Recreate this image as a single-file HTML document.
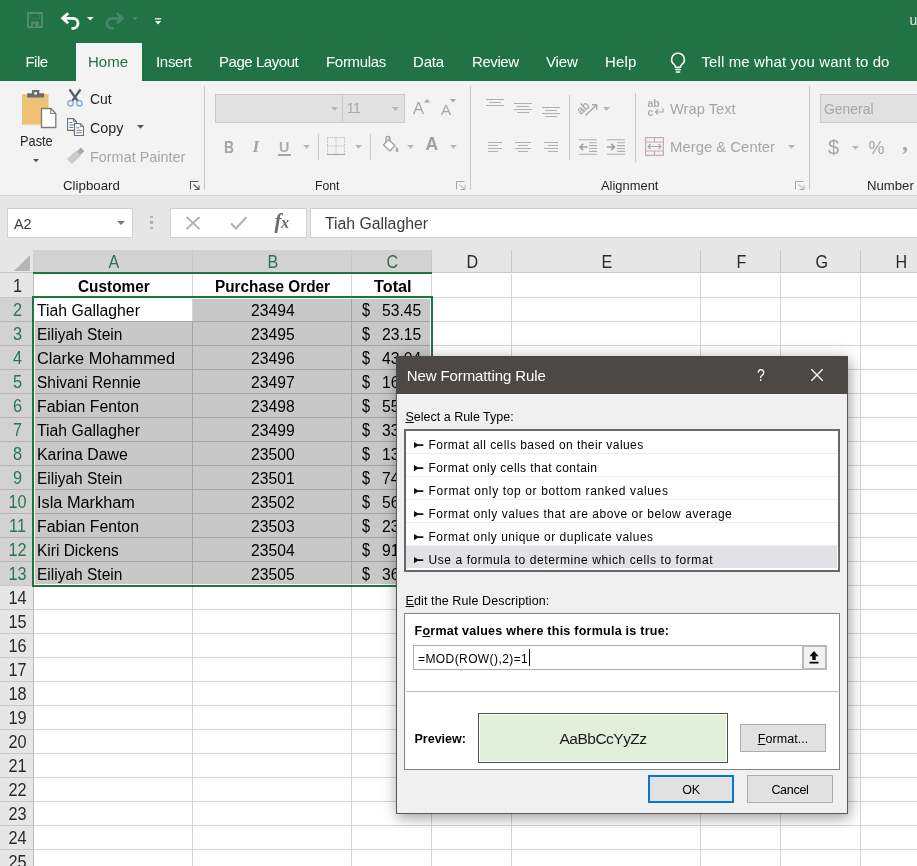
<!DOCTYPE html>
<html>
<head>
<meta charset="utf-8">
<title>Excel</title>
<style>
html,body{margin:0;padding:0;}
body{-webkit-font-smoothing:antialiased;will-change:transform;width:917px;height:866px;overflow:hidden;position:relative;background:#fff;font-family:"Liberation Sans",sans-serif;font-size:15px;color:#262626;}
.a{position:absolute;}
.t{position:absolute;white-space:nowrap;line-height:1;}
svg{position:absolute;overflow:visible;}
#titlebar{position:absolute;left:0;top:0;width:917px;height:80.6px;background:#217346;}
#hometab{position:absolute;left:76px;top:43px;width:66px;height:38px;background:#f3f3f3;}
.tab{position:absolute;top:53.7px;color:#fff;font-size:15px;white-space:nowrap;line-height:1;}
#ribbon{position:absolute;left:0;top:80.6px;width:917px;height:114.4px;background:#f3f3f3;}
#ribbonline{position:absolute;left:0;top:195px;width:917px;height:1px;background:#d6d6d6;}
#fbar{position:absolute;left:0;top:196px;width:917px;height:54px;background:#e6e6e6;}
.vsep{position:absolute;width:1px;background:#c9c9c9;}
.gl{position:absolute;top:179px;font-size:13.5px;color:#262626;white-space:nowrap;line-height:1;display:inline-block;transform-origin:0 50%;}
.rt{position:absolute;white-space:nowrap;line-height:1;font-size:15px;color:#262626;display:inline-block;transform-origin:0 50%;}
.dis{color:#a6a6a6;}
.box{position:absolute;background:#fff;border:1px solid #d0d0d0;box-sizing:border-box;}
.dbox{position:absolute;background:#e1e1e1;border:1px solid #c8c8c8;box-sizing:border-box;}
/* grid */
#grid{position:absolute;left:0;top:250px;width:917px;height:616px;background:#fff;overflow:hidden;}
.ch{position:absolute;top:0;height:22px;background:#e6e6e6;border-right:1px solid #c8c8c8;box-sizing:border-box;text-align:center;padding-left:2px;font-size:17.5px;line-height:25px;color:#2b2b2b;}
.ch.sel{background:#d2d2d2;color:#2a7550;}
.rh{position:absolute;left:0.5px;width:33px;height:24px;text-align:center;font-size:17.5px;line-height:25px;color:#2b2b2b;transform:scaleX(0.93);}
.rh.sel{color:#2a7550;}
.vl{position:absolute;top:24px;width:1px;height:600px;background:#d4d4d4;}
.hl{position:absolute;left:33px;height:1px;width:884px;background:#d4d4d4;}
.c{position:absolute;height:24px;line-height:25px;font-size:16px;color:#000;white-space:nowrap;display:inline-block;transform-origin:0 50%;}
.b{font-weight:bold;color:#000;}
/* dialog */
#dlg{position:absolute;left:396px;top:356px;width:452px;height:458px;background:#f0f0f0;box-shadow:0 0 16px rgba(0,0,0,0.16),2px 5px 12px rgba(0,0,0,0.26);border:1px solid #5a5856;box-sizing:border-box;}
#dtitle{position:absolute;left:-1px;top:-1px;width:452px;height:38px;background:#4b4846;}
.dt{position:absolute;white-space:nowrap;line-height:1;font-size:12px;color:#000;}
.li{position:absolute;left:0;width:432px;height:23px;box-sizing:border-box;border-bottom:1px solid #ececec;}
.btn{position:absolute;box-sizing:border-box;background:#e1e1e1;border:1px solid #adadad;text-align:center;font-size:12.5px;color:#000;}
u{text-decoration:underline;}
</style>
</head>
<body>
<div id="titlebar"></div>
<div id="hometab"></div>
<!-- QAT icons -->
<svg style="left:27px;top:12px" width="16" height="16" viewBox="0 0 16 16"><path d="M1 1h14v14h-14z" fill="none" stroke="#4e8d6b" stroke-width="2"/><path d="M4 9.500h8v5.500h-8z" fill="#4e8d6b"/><path d="M6.200 11.500h2v3.500h-2z" fill="#217346"/><path d="M3.500 2v4.500h9v-4.500" fill="none" stroke="#3b8059" stroke-width="1"/></svg>
<svg style="left:60px;top:12px" width="21" height="17" viewBox="0 0 21 17"><path d="M8.200 1.200 L2.600 6.300 L8.200 11.200 M3 6.300 H13 a5 5 0 0 1 0 10 H11.500" fill="none" stroke="#fff" stroke-width="2.800" stroke-linejoin="miter"/></svg>
<svg style="left:87px;top:17px" width="7" height="4" viewBox="0 0 7 4"><path d="M0 0h6.600l-3.300 3.400z" fill="#fff"/></svg>
<svg style="left:104px;top:12px" width="21" height="17" viewBox="0 0 21 17"><path d="M12.800 1.200 L18.400 6.300 L12.800 11.200 M18 6.300 H8 a5 5 0 0 0 0 10 H9.500" fill="none" stroke="#43896a" stroke-width="2.800"/></svg>
<svg style="left:131.500px;top:17px" width="7" height="4" viewBox="0 0 7 4"><path d="M0 0h6l-3 3.200z" fill="#43896a"/></svg>
<svg style="left:154.500px;top:18px" width="7" height="7" viewBox="0 0 7 7"><path d="M0 0.200h6.200v1.300h-6.200z M0 3h6.200l-3.100 3.500z" fill="#fff"/></svg>
<!-- tabs -->
<span class="tab" id="t_file" style="letter-spacing:-0.54px;left:25.5px">File</span>
<span class="tab" id="t_home" style="left:88px;color:#217346">Home</span>
<span class="tab" id="t_insert" style="letter-spacing:-0.3px;left:156px">Insert</span>
<span class="tab" id="t_pl" style="letter-spacing:-0.45px;left:219px">Page Layout</span>
<span class="tab" id="t_form" style="letter-spacing:-0.31px;left:326px">Formulas</span>
<span class="tab" id="t_data" style="letter-spacing:-0.17px;left:413px">Data</span>
<span class="tab" id="t_rev" style="letter-spacing:-0.41px;left:472px">Review</span>
<span class="tab" id="t_view" style="letter-spacing:-0.14px;left:546px">View</span>
<span class="tab" id="t_help" style="letter-spacing:0.14px;left:605px">Help</span>
<svg style="left:668.500px;top:51.700px" width="18" height="22" viewBox="0 0 18 22"><path d="M9 1.2a6.3 6.3 0 0 0-3.6 11.5c.8.7 1.1 1.500 1.100 2.600h5c0-1.100.3-1.900 1.100-2.600A6.300 6.300 0 0 0 9 1.200z M6.200 17.600h5.600 M6.800 20h4.400" fill="none" stroke="#fff" stroke-width="1.500"/></svg>
<span class="tab" id="t_tell" style="letter-spacing:0.11px;left:701.5px">Tell me what you want to do</span>
<span class="tab" id="t_u" style="left:909.500px;top:13.300px;font-size:14px;color:#dfeee6">u</span>
<div id="ribbon"></div>
<div id="ribbonline"></div>
<!-- ===== Clipboard group ===== -->
<!-- paste icon -->
<svg style="left:21px;top:89px" width="36" height="40" viewBox="0 0 36 40">
<rect x="1" y="5.200" width="26.500" height="30.500" fill="#eec273"/>
<path d="M6.200 4.200h4.800v-3.200h7.300v3.200h4.800v4.400h-16.900z" fill="#6b6b6b"/>
<rect x="13.300" y="3" width="2.600" height="2.600" fill="#f3f3f3"/>
<path d="M20.500 19.500h9.300l5 5v14h-14.300z" fill="#fff" stroke="#7a7a7a" stroke-width="1.300"/>
<path d="M29.800 19.500v5h5" fill="none" stroke="#7a7a7a" stroke-width="1.100"/>
</svg>
<span class="rt" id="r_paste" style="transform:scaleX(0.852);left:19.500px;top:133px">Paste</span>
<svg style="left:33.200px;top:159px" width="6" height="4" viewBox="0 0 6 4"><path d="M0 0h6l-3 3.300z" fill="#555"/></svg>
<!-- scissors -->
<svg style="left:66px;top:89px" width="18" height="18" viewBox="0 0 18 18">
<path d="M3.500 0.500 L11.800 12 M14.500 0.500 L6.200 12" fill="none" stroke="#5c5c64" stroke-width="2.200"/>
<circle cx="4.500" cy="14.300" r="2.700" fill="#eaf3fb" stroke="#7fa9d9" stroke-width="1.300"/>
<circle cx="13.400" cy="14.300" r="2.700" fill="#eaf3fb" stroke="#7fa9d9" stroke-width="1.300"/>
</svg>
<span class="rt" id="r_cut" style="transform:scaleX(0.930);left:90px;top:90.500px">Cut</span>
<!-- copy icon -->
<svg style="left:67px;top:118px" width="18" height="19" viewBox="0 0 18 19">
<path d="M0.600 0.600h5.800l3 3v8.800h-8.800z" fill="#fff" stroke="#6e6e6e" stroke-width="1.100"/>
<path d="M6.400 0.600v3h3" fill="none" stroke="#6e6e6e" stroke-width="0.900"/>
<path d="M2.300 4.500h3 M2.300 7h5 M2.300 9.500h4" stroke="#5f7f9f" stroke-width="1"/>
<path d="M7.500 5.500h5.800l3.200 3.200v8.800h-9z" fill="#fff" stroke="#6e6e6e" stroke-width="1.100"/>
<path d="M13.300 5.500v3.200h3.200" fill="none" stroke="#6e6e6e" stroke-width="0.900"/>
<path d="M9.300 9.800h3 M9.300 12.300h5.500 M9.300 14.800h5.500" stroke="#5f7f9f" stroke-width="1"/>
</svg>
<span class="rt" id="r_copy" style="transform:scaleX(0.956);left:90px;top:120px">Copy</span>
<svg style="left:136.500px;top:125px" width="7" height="4" viewBox="0 0 7 4"><path d="M0 0h7l-3.500 3.800z" fill="#555"/></svg>
<!-- format painter icon (disabled) -->
<svg style="left:67px;top:148px" width="18" height="15" viewBox="0 0 18 15">
<g transform="rotate(-42 9 7.500)">
<rect x="12.500" y="5" width="5.500" height="5" fill="#a9a9a9"/>
<rect x="10.200" y="4.300" width="2.300" height="6.400" fill="#c2c2c2"/>
<rect x="0" y="3.800" width="10.200" height="7.400" fill="#d2d2d2"/>
<path d="M0 5.600h10 M0 7.500h10 M0 9.400h10" stroke="#c0c0c0" stroke-width="0.800"/>
</g>
</svg>
<span class="rt dis" id="r_fp" style="transform:scaleX(0.961);left:90px;top:148.500px">Format Painter</span>
<span class="gl" id="g_clip" style="transform:scaleX(0.984);left:62.500px">Clipboard</span>
<svg class="lnch" style="left:190px;top:181px" width="10" height="9" viewBox="0 0 10 9"><path d="M0.500 8.500v-8h8 M3.500 3.500l5 4.500 M9 4.500v4h-4.500" fill="none" stroke="#5a5a5a" stroke-width="1.1"/></svg>
<div class="vsep" style="left:204px;top:86px;height:104px"></div>
<!-- ===== Font group ===== -->
<div class="dbox" style="left:215px;top:94px;width:128px;height:29px"></div>
<div class="dbox" style="left:342px;top:94px;width:63px;height:29px"></div>
<svg style="left:330.500px;top:107px" width="7" height="4" viewBox="0 0 7 4"><path d="M0 0h7l-3.500 3.800z" fill="#b5b5b5"/></svg>
<span class="rt dis" id="r_11" style="transform:scaleX(0.851);left:347px;top:100px;font-size:15.500px">11</span>
<svg style="left:392px;top:107px" width="7" height="4" viewBox="0 0 7 4"><path d="M0 0h7l-3.500 3.800z" fill="#b5b5b5"/></svg>
<span class="rt dis" id="r_Aup" style="left:413px;top:100px;font-size:16.500px">A</span>
<svg style="left:423.500px;top:98.500px" width="6" height="4" viewBox="0 0 6 4"><path d="M0 3.500h6l-3-3.500z" fill="#a6a6a6"/></svg>
<span class="rt dis" id="r_Adn" style="left:441px;top:101.500px;font-size:15px">A</span>
<svg style="left:450px;top:98.500px" width="6" height="4" viewBox="0 0 6 4"><path d="M0 0h6l-3 3.500z" fill="#a6a6a6"/></svg>
<span class="rt dis" id="r_B" style="transform:scaleX(0.84);left:223.500px;top:138.500px;font-size:16.500px;font-weight:bold">B</span>
<span class="rt dis" id="r_I" style="left:252.500px;top:138px;font-size:17.500px;font-style:italic;font-weight:bold;font-family:'Liberation Serif',serif">I</span>
<span class="rt dis" id="r_U" style="transform:scaleX(0.92);left:278.500px;top:138.500px;font-size:15.500px;font-weight:bold;color:#ababab">U</span>
<div class="a" style="left:278px;top:154px;width:13px;height:1.500px;background:#a6a6a6"></div>
<svg style="left:302.500px;top:145px" width="7" height="4" viewBox="0 0 7 4"><path d="M0 0h7l-3.500 3.800z" fill="#b5b5b5"/></svg>
<div class="vsep" style="left:318px;top:134px;height:26px"></div>
<!-- borders icon -->
<svg style="left:327px;top:137px" width="18" height="18" viewBox="0 0 18 18">
<path d="M0.500 0.500h17 M0.500 0.500v17 M17.500 0.500v17 M9 0.500v17 M0.500 9h17" fill="none" stroke="#c59fcf" stroke-width="1" stroke-dasharray="1 1.200"/>
<path d="M0 17.500h18" stroke="#adadad" stroke-width="1.300"/>
</svg>
<svg style="left:354.500px;top:145px" width="7" height="4" viewBox="0 0 7 4"><path d="M0 0h7l-3.500 3.800z" fill="#b5b5b5"/></svg>
<div class="vsep" style="left:370px;top:134px;height:26px"></div>
<!-- fill bucket -->
<svg style="left:382px;top:136px" width="17" height="17" viewBox="0 0 17 17">
<path d="M6.500 3.500l6.500 6-5 5.500-6.500-6z" fill="#fff" stroke="#a0a0a0" stroke-width="1.300" stroke-linejoin="round"/>
<path d="M4 6.500v-4a2 2 0 0 1 4 0v3" fill="none" stroke="#a0a0a0" stroke-width="1.300"/>
<path d="M14.500 10.500c1.500 2 2 3 2 4a1.500 1.500 0 0 1-3 0c0-1 .3-2 1-4z" fill="#a9a9a9"/>
</svg>
<svg style="left:406.500px;top:145px" width="7" height="4" viewBox="0 0 7 4"><path d="M0 0h7l-3.500 3.800z" fill="#b5b5b5"/></svg>
<span class="rt dis" id="r_Afc" style="left:425.500px;top:136px;font-size:17.500px;font-weight:bold;color:#a0a0a0">A</span>
<svg style="left:449.500px;top:145px" width="7" height="4" viewBox="0 0 7 4"><path d="M0 0h7l-3.500 3.800z" fill="#b5b5b5"/></svg>
<span class="gl" id="g_font" style="transform:scaleX(0.907);left:314.500px">Font</span>
<svg class="lnch" style="left:456px;top:181px" width="10" height="9" viewBox="0 0 10 9"><path d="M0.500 8.500v-8h8 M3.500 3.500l5 4.500 M9 4.500v4h-4.500" fill="none" stroke="#a8a8a8" stroke-width="1"/></svg>
<div class="vsep" style="left:470px;top:86px;height:104px"></div>
<!-- ===== Alignment group ===== -->
<!-- top row vertical align icons -->
<svg style="left:486px;top:98px" width="18" height="10" viewBox="0 0 18 10"><path d="M0 1.500h18 M3 4.500h12 M0 7.500h18" stroke="#b0b0b0" stroke-width="1.200"/></svg>
<svg style="left:514px;top:102px" width="18" height="12" viewBox="0 0 18 12"><path d="M0 1.500h18 M3 4.500h12 M0 7.500h18 M3 10.500h12" stroke="#b0b0b0" stroke-width="1.200"/></svg>
<svg style="left:542px;top:106px" width="18" height="12" viewBox="0 0 18 12"><path d="M0 1.500h18 M3 4.500h12 M0 7.500h18 M3 10.500h12" stroke="#b0b0b0" stroke-width="1.200"/></svg>
<div class="vsep" style="left:569px;top:95px;height:65px"></div>
<!-- orientation -->
<svg style="left:578px;top:99px" width="21" height="17" viewBox="0 0 21 17">
<text x="-1" y="12" font-family="Liberation Sans" font-size="11.500" fill="#a6a6a6" stroke="#a6a6a6" stroke-width="0.300" transform="rotate(-42 6 9)">ab</text>
<path d="M7.500 16.500 L18 6.500 M14 5.800h4.700v4.700" fill="none" stroke="#a8a8a8" stroke-width="1.400"/>
</svg>
<svg style="left:602.500px;top:106.500px" width="7" height="4" viewBox="0 0 7 4"><path d="M0 0h7l-3.500 3.800z" fill="#b5b5b5"/></svg>
<div class="vsep" style="left:635px;top:93px;height:69px"></div>
<!-- wrap text icon -->
<svg style="left:647px;top:99px" width="18" height="18" viewBox="0 0 18 18">
<text x="0.500" y="7.500" font-family="Liberation Sans" font-size="10.500" font-weight="bold" fill="#ababab">ab</text>
<text x="0.500" y="16.500" font-family="Liberation Sans" font-size="10.500" font-weight="bold" fill="#ababab">c</text>
<path d="M16 9.500v3.500h-7.500 M11 10.500l-2.500 2.500 2.500 2.500" fill="none" stroke="#a8a8a8" stroke-width="1.200"/>
</svg>
<span class="rt dis" id="r_wrap" style="transform:scaleX(0.979);left:670px;top:100.500px">Wrap Text</span>
<!-- row 2 horizontal align icons -->
<svg style="left:488px;top:141px" width="14" height="12" viewBox="0 0 14 12"><path d="M0 1.500h14 M0 4.500h10 M0 7.500h14 M0 10.500h10" stroke="#b0b0b0" stroke-width="1.200"/></svg>
<svg style="left:515px;top:141px" width="16" height="12" viewBox="0 0 16 12"><path d="M0 1.500h16 M3 4.500h10 M0 7.500h16 M3 10.500h10" stroke="#b0b0b0" stroke-width="1.200"/></svg>
<svg style="left:544px;top:141px" width="14" height="12" viewBox="0 0 14 12"><path d="M0 1.500h14 M4 4.500h10 M0 7.500h14 M4 10.500h10" stroke="#b0b0b0" stroke-width="1.200"/></svg>
<!-- indent icons -->
<svg style="left:579px;top:139px" width="18" height="16" viewBox="0 0 18 16"><path d="M0 0.800h18 M10 3.700h8 M10 6.600h8 M10 9.500h8 M10 12.400h8 M0 15.300h18" stroke="#b0b0b0" stroke-width="1.100"/><path d="M8.500 8h-7.500 M4.200 4.800l-3.200 3.200 3.200 3.200" fill="none" stroke="#a0a0a0" stroke-width="1.700"/></svg>
<svg style="left:607px;top:139px" width="18" height="16" viewBox="0 0 18 16"><path d="M0 0.800h18 M10 3.700h8 M10 6.600h8 M10 9.500h8 M10 12.400h8 M0 15.300h18" stroke="#b0b0b0" stroke-width="1.100"/><path d="M0 8h7.500 M4.300 4.800l3.200 3.200-3.200 3.200" fill="none" stroke="#a0a0a0" stroke-width="1.700"/></svg>
<!-- merge icon -->
<svg style="left:645px;top:137px" width="19" height="19" viewBox="0 0 19 19">
<path d="M0.600 0.600h17.800v17.800h-17.800z M0.500 5h18 M0.500 14h18 M9.500 0.500v4.500 M9.500 14v4.500" fill="none" stroke="#c4acb6" stroke-width="1.200"/>
<path d="M3 9.500h13 M5.500 7l-2.500 2.500 2.500 2.500 M13.500 7l2.500 2.500-2.500 2.500" fill="none" stroke="#a8a8a8" stroke-width="1.100"/>
</svg>
<span class="rt dis" id="r_merge" style="transform:scaleX(0.992);left:670px;top:139px">Merge &amp; Center</span>
<svg style="left:787.500px;top:145px" width="7" height="4" viewBox="0 0 7 4"><path d="M0 0h7l-3.500 3.800z" fill="#b5b5b5"/></svg>
<span class="gl" id="g_align" style="transform:scaleX(0.956);left:600.500px">Alignment</span>
<svg class="lnch" style="left:795px;top:181px" width="10" height="9" viewBox="0 0 10 9"><path d="M0.500 8.500v-8h8 M3.500 3.500l5 4.500 M9 4.500v4h-4.500" fill="none" stroke="#a8a8a8" stroke-width="1"/></svg>
<div class="vsep" style="left:809px;top:86px;height:104px"></div>
<!-- ===== Number group ===== -->
<div class="dbox" style="left:820px;top:94px;width:110px;height:29px"></div>
<span class="rt dis" id="r_gen" style="transform:scaleX(0.927);left:823.500px;top:100.500px">General</span>
<span class="rt dis" id="r_dollar" style="left:828px;top:136.500px;font-size:20px">$</span>
<svg style="left:851.500px;top:146px" width="7" height="4" viewBox="0 0 7 4"><path d="M0 0h7l-3.500 3.800z" fill="#b5b5b5"/></svg>
<span class="rt dis" id="r_pct" style="left:868.500px;top:138.500px;font-size:18px">%</span>
<span class="rt dis" id="r_comma" style="left:902px;top:130px;font-size:24px;font-weight:bold;font-family:'Liberation Serif',serif">,</span>
<span class="gl" id="g_num" style="transform:scaleX(0.975);left:867px">Number</span>
<div id="fbar"></div>
<div class="box" style="left:7px;top:208px;width:126px;height:30px"></div>
<span class="rt" id="f_a2" style="transform:scaleX(0.959);left:13.500px;top:215.500px;color:#3b3b3b">A2</span>
<svg style="left:116.500px;top:221px" width="8" height="4" viewBox="0 0 8 4"><path d="M0 0h8l-4 4z" fill="#7a7a7a"/></svg>
<div class="a" style="left:150px;top:215.500px;width:2.500px;height:2.500px;background:#b0b0b0"></div>
<div class="a" style="left:150px;top:221px;width:2.500px;height:2.500px;background:#b0b0b0"></div>
<div class="a" style="left:150px;top:226.500px;width:2.500px;height:2.500px;background:#b0b0b0"></div>
<div class="box" style="left:170px;top:208px;width:137px;height:30px"></div>
<svg style="left:186px;top:216px" width="14" height="14" viewBox="0 0 14 14"><path d="M0.500 1l13 12 M13.500 1l-13 12" stroke="#b4b4b4" stroke-width="2"/></svg>
<svg style="left:229.500px;top:216px" width="18" height="14" viewBox="0 0 18 14"><path d="M1 7.500l5 5 10.500-11.500" fill="none" stroke="#b4b4b4" stroke-width="2.200"/></svg>
<span class="t" id="f_fx" style="left:274.500px;top:210.500px;font-family:'Liberation Serif',serif;font-style:italic;font-weight:bold;font-size:21px;color:#6a6a6a;letter-spacing:-0.5px">f<span style="font-size:16px">x</span></span>
<div class="box" style="left:310px;top:208px;width:620px;height:30px"></div>
<span class="rt" id="f_txt" style="transform:scaleX(0.987);left:324.500px;top:216px;color:#3b3b3b;font-size:16px">Tiah Gallagher</span>
<div id="grid">
<div class="a" style="left:0;top:0;width:33px;height:24px;background:#e6e6e6"></div>
<svg style="left:14px;top:5px" width="16" height="16" viewBox="0 0 16 16"><path d="M16 0v16h-16z" fill="#b5b5b5"/></svg>
<div class="ch sel" style="left:33px;width:160px"><span style="display:inline-block;transform:scaleX(0.92)">A</span></div>
<div class="ch sel" style="left:193px;width:159px"><span style="display:inline-block;transform:scaleX(0.92)">B</span></div>
<div class="ch sel" style="left:352px;width:80px"><span style="display:inline-block;transform:scaleX(0.92)">C</span></div>
<div class="ch" style="left:432px;width:80px"><span style="display:inline-block;transform:scaleX(0.92)">D</span></div>
<div class="ch" style="left:512px;width:189px"><span style="display:inline-block;transform:scaleX(0.92)">E</span></div>
<div class="ch" style="left:701px;width:80px"><span style="display:inline-block;transform:scaleX(0.92)">F</span></div>
<div class="ch" style="left:781px;width:80px"><span style="display:inline-block;transform:scaleX(0.92)">G</span></div>
<div class="ch" style="left:861px;width:80px"><span style="display:inline-block;transform:scaleX(0.92)">H</span></div>
<div class="a" style="left:0;top:22px;width:917px;height:1px;background:#c8c8c8"></div>
<div class="a" style="left:33px;top:22px;width:399px;height:2px;background:#217346"></div>
<div class="a" style="left:33px;top:48px;width:399px;height:288px;background:#c8c8c8"></div>
<div class="a" style="left:34px;top:48px;width:159px;height:24px;background:#fff"></div>
<div class="vl" style="left:192px"></div>
<div class="vl" style="left:351px"></div>
<div class="vl" style="left:431px"></div>
<div class="vl" style="left:511px"></div>
<div class="vl" style="left:700px"></div>
<div class="vl" style="left:780px"></div>
<div class="vl" style="left:860px"></div>
<div class="vl" style="left:940px"></div>
<div class="a" style="left:192px;top:72px;width:1px;height:264px;background:#a4a4a4"></div>
<div class="a" style="left:351px;top:72px;width:1px;height:264px;background:#a4a4a4"></div>
<div class="a" style="left:351px;top:48px;width:1px;height:24px;background:#a4a4a4"></div>
<div class="hl" style="top:47px"></div>
<div class="hl" style="top:71px"></div>
<div class="hl" style="top:95px"></div>
<div class="hl" style="top:119px"></div>
<div class="hl" style="top:143px"></div>
<div class="hl" style="top:167px"></div>
<div class="hl" style="top:191px"></div>
<div class="hl" style="top:215px"></div>
<div class="hl" style="top:239px"></div>
<div class="hl" style="top:263px"></div>
<div class="hl" style="top:287px"></div>
<div class="hl" style="top:311px"></div>
<div class="hl" style="top:335px"></div>
<div class="hl" style="top:359px"></div>
<div class="hl" style="top:383px"></div>
<div class="hl" style="top:407px"></div>
<div class="hl" style="top:431px"></div>
<div class="hl" style="top:455px"></div>
<div class="hl" style="top:479px"></div>
<div class="hl" style="top:503px"></div>
<div class="hl" style="top:527px"></div>
<div class="hl" style="top:551px"></div>
<div class="hl" style="top:575px"></div>
<div class="hl" style="top:599px"></div>
<div class="hl" style="top:623px"></div>
<div class="hl" style="top:647px"></div>
<div class="a" style="left:33px;top:71px;width:399px;height:1px;background:#a4a4a4"></div>
<div class="a" style="left:33px;top:95px;width:399px;height:1px;background:#a4a4a4"></div>
<div class="a" style="left:33px;top:119px;width:399px;height:1px;background:#a4a4a4"></div>
<div class="a" style="left:33px;top:143px;width:399px;height:1px;background:#a4a4a4"></div>
<div class="a" style="left:33px;top:167px;width:399px;height:1px;background:#a4a4a4"></div>
<div class="a" style="left:33px;top:191px;width:399px;height:1px;background:#a4a4a4"></div>
<div class="a" style="left:33px;top:215px;width:399px;height:1px;background:#a4a4a4"></div>
<div class="a" style="left:33px;top:239px;width:399px;height:1px;background:#a4a4a4"></div>
<div class="a" style="left:33px;top:263px;width:399px;height:1px;background:#a4a4a4"></div>
<div class="a" style="left:33px;top:287px;width:399px;height:1px;background:#a4a4a4"></div>
<div class="a" style="left:33px;top:311px;width:399px;height:1px;background:#a4a4a4"></div>
<div class="a" style="left:0;top:24px;width:33px;height:600px;background:#e6e6e6"></div>
<div class="a" style="left:0;top:48px;width:33px;height:288px;background:#d2d2d2"></div>
<div class="a" style="left:0;top:47px;width:33px;height:1px;background:#c8c8c8"></div>
<div class="rh" style="top:24px">1</div>
<div class="a" style="left:0;top:71px;width:33px;height:1px;background:#b4b4b4"></div>
<div class="rh sel" style="top:48px">2</div>
<div class="a" style="left:0;top:95px;width:33px;height:1px;background:#b4b4b4"></div>
<div class="rh sel" style="top:72px">3</div>
<div class="a" style="left:0;top:119px;width:33px;height:1px;background:#b4b4b4"></div>
<div class="rh sel" style="top:96px">4</div>
<div class="a" style="left:0;top:143px;width:33px;height:1px;background:#b4b4b4"></div>
<div class="rh sel" style="top:120px">5</div>
<div class="a" style="left:0;top:167px;width:33px;height:1px;background:#b4b4b4"></div>
<div class="rh sel" style="top:144px">6</div>
<div class="a" style="left:0;top:191px;width:33px;height:1px;background:#b4b4b4"></div>
<div class="rh sel" style="top:168px">7</div>
<div class="a" style="left:0;top:215px;width:33px;height:1px;background:#b4b4b4"></div>
<div class="rh sel" style="top:192px">8</div>
<div class="a" style="left:0;top:239px;width:33px;height:1px;background:#b4b4b4"></div>
<div class="rh sel" style="top:216px">9</div>
<div class="a" style="left:0;top:263px;width:33px;height:1px;background:#b4b4b4"></div>
<div class="rh sel" style="top:240px">10</div>
<div class="a" style="left:0;top:287px;width:33px;height:1px;background:#b4b4b4"></div>
<div class="rh sel" style="top:264px">11</div>
<div class="a" style="left:0;top:311px;width:33px;height:1px;background:#b4b4b4"></div>
<div class="rh sel" style="top:288px">12</div>
<div class="a" style="left:0;top:335px;width:33px;height:1px;background:#c8c8c8"></div>
<div class="rh sel" style="top:312px">13</div>
<div class="a" style="left:0;top:359px;width:33px;height:1px;background:#c8c8c8"></div>
<div class="rh" style="top:336px">14</div>
<div class="a" style="left:0;top:383px;width:33px;height:1px;background:#c8c8c8"></div>
<div class="rh" style="top:360px">15</div>
<div class="a" style="left:0;top:407px;width:33px;height:1px;background:#c8c8c8"></div>
<div class="rh" style="top:384px">16</div>
<div class="a" style="left:0;top:431px;width:33px;height:1px;background:#c8c8c8"></div>
<div class="rh" style="top:408px">17</div>
<div class="a" style="left:0;top:455px;width:33px;height:1px;background:#c8c8c8"></div>
<div class="rh" style="top:432px">18</div>
<div class="a" style="left:0;top:479px;width:33px;height:1px;background:#c8c8c8"></div>
<div class="rh" style="top:456px">19</div>
<div class="a" style="left:0;top:503px;width:33px;height:1px;background:#c8c8c8"></div>
<div class="rh" style="top:480px">20</div>
<div class="a" style="left:0;top:527px;width:33px;height:1px;background:#c8c8c8"></div>
<div class="rh" style="top:504px">21</div>
<div class="a" style="left:0;top:551px;width:33px;height:1px;background:#c8c8c8"></div>
<div class="rh" style="top:528px">22</div>
<div class="a" style="left:0;top:575px;width:33px;height:1px;background:#c8c8c8"></div>
<div class="rh" style="top:552px">23</div>
<div class="a" style="left:0;top:599px;width:33px;height:1px;background:#c8c8c8"></div>
<div class="rh" style="top:576px">24</div>
<div class="a" style="left:0;top:623px;width:33px;height:1px;background:#c8c8c8"></div>
<div class="rh" style="top:600px">25</div>
<div class="a" style="left:0;top:647px;width:33px;height:1px;background:#c8c8c8"></div>
<div class="rh" style="top:624px">26</div>
<div class="a" style="left:33px;top:24px;width:1px;height:600px;background:#bdbdbd"></div>
<div class="a" style="left:32px;top:48px;width:2px;height:288px;background:#217346"></div>
<span class="c b" id="h_cust" style="left:77.500px;top:24px;transform:scaleX(0.96)">Customer</span>
<span class="c b" id="h_po" style="left:214.500px;top:24px;transform:scaleX(0.958)">Purchase Order</span>
<span class="c b" id="h_tot" style="left:373.500px;top:24px;transform:scaleX(1.015)">Total</span>
<span class="c " id="n2" style="left:37px;top:48px;transform:scaleX(0.986);">Tiah Gallagher</span>
<span class="c " id="p2" style="left:250.5px;top:48px;transform:scaleX(0.98);">23494</span>
<span class="c " id="d2" style="left:362px;top:48px;transform:scaleX(0.8);font-size:18px;">$</span>
<span class="c " id="v2" style="left:382px;top:48px;transform:scaleX(0.98);">53.45</span>
<span class="c " id="n3" style="left:37px;top:72px;transform:scaleX(0.969);">Eiliyah Stein</span>
<span class="c " id="p3" style="left:250.5px;top:72px;transform:scaleX(0.98);">23495</span>
<span class="c " id="d3" style="left:362px;top:72px;transform:scaleX(0.8);font-size:18px;">$</span>
<span class="c " id="v3" style="left:382px;top:72px;transform:scaleX(0.98);">23.15</span>
<span class="c " id="n4" style="left:37px;top:96px;transform:scaleX(1.021);">Clarke Mohammed</span>
<span class="c " id="p4" style="left:250.5px;top:96px;transform:scaleX(0.98);">23496</span>
<span class="c " id="d4" style="left:362px;top:96px;transform:scaleX(0.8);font-size:18px;">$</span>
<span class="c " id="v4" style="left:382px;top:96px;transform:scaleX(0.98);">43.04</span>
<span class="c " id="n5" style="left:37px;top:120px;transform:scaleX(0.965);">Shivani Rennie</span>
<span class="c " id="p5" style="left:250.5px;top:120px;transform:scaleX(0.98);">23497</span>
<span class="c " id="d5" style="left:362px;top:120px;transform:scaleX(0.8);font-size:18px;">$</span>
<span class="c " id="v5" style="left:382px;top:120px;transform:scaleX(0.98);">16.32</span>
<span class="c " id="n6" style="left:37px;top:144px;transform:scaleX(0.988);">Fabian Fenton</span>
<span class="c " id="p6" style="left:250.5px;top:144px;transform:scaleX(0.98);">23498</span>
<span class="c " id="d6" style="left:362px;top:144px;transform:scaleX(0.8);font-size:18px;">$</span>
<span class="c " id="v6" style="left:382px;top:144px;transform:scaleX(0.98);">55.90</span>
<span class="c " id="n7" style="left:37px;top:168px;transform:scaleX(0.986);">Tiah Gallagher</span>
<span class="c " id="p7" style="left:250.5px;top:168px;transform:scaleX(0.98);">23499</span>
<span class="c " id="d7" style="left:362px;top:168px;transform:scaleX(0.8);font-size:18px;">$</span>
<span class="c " id="v7" style="left:382px;top:168px;transform:scaleX(0.98);">33.27</span>
<span class="c " id="n8" style="left:37px;top:192px;transform:scaleX(0.991);">Karina Dawe</span>
<span class="c " id="p8" style="left:250.5px;top:192px;transform:scaleX(0.98);">23500</span>
<span class="c " id="d8" style="left:362px;top:192px;transform:scaleX(0.8);font-size:18px;">$</span>
<span class="c " id="v8" style="left:382px;top:192px;transform:scaleX(0.98);">13.64</span>
<span class="c " id="n9" style="left:37px;top:216px;transform:scaleX(0.969);">Eiliyah Stein</span>
<span class="c " id="p9" style="left:250.5px;top:216px;transform:scaleX(0.98);">23501</span>
<span class="c " id="d9" style="left:362px;top:216px;transform:scaleX(0.8);font-size:18px;">$</span>
<span class="c " id="v9" style="left:382px;top:216px;transform:scaleX(0.98);">74.18</span>
<span class="c " id="n10" style="left:37px;top:240px;transform:scaleX(1.019);">Isla Markham</span>
<span class="c " id="p10" style="left:250.5px;top:240px;transform:scaleX(0.98);">23502</span>
<span class="c " id="d10" style="left:362px;top:240px;transform:scaleX(0.8);font-size:18px;">$</span>
<span class="c " id="v10" style="left:382px;top:240px;transform:scaleX(0.98);">56.02</span>
<span class="c " id="n11" style="left:37px;top:264px;transform:scaleX(0.988);">Fabian Fenton</span>
<span class="c " id="p11" style="left:250.5px;top:264px;transform:scaleX(0.98);">23503</span>
<span class="c " id="d11" style="left:362px;top:264px;transform:scaleX(0.8);font-size:18px;">$</span>
<span class="c " id="v11" style="left:382px;top:264px;transform:scaleX(0.98);">23.77</span>
<span class="c " id="n12" style="left:37px;top:288px;transform:scaleX(0.968);">Kiri Dickens</span>
<span class="c " id="p12" style="left:250.5px;top:288px;transform:scaleX(0.98);">23504</span>
<span class="c " id="d12" style="left:362px;top:288px;transform:scaleX(0.8);font-size:18px;">$</span>
<span class="c " id="v12" style="left:382px;top:288px;transform:scaleX(0.98);">91.50</span>
<span class="c " id="n13" style="left:37px;top:312px;transform:scaleX(0.969);">Eiliyah Stein</span>
<span class="c " id="p13" style="left:250.5px;top:312px;transform:scaleX(0.98);">23505</span>
<span class="c " id="d13" style="left:362px;top:312px;transform:scaleX(0.8);font-size:18px;">$</span>
<span class="c " id="v13" style="left:382px;top:312px;transform:scaleX(0.98);">36.84</span>
<div class="a" style="left:32px;top:46px;width:401px;height:291px;border:2px solid #217346;box-sizing:border-box;box-shadow:inset 0 0 0 1px rgba(255,255,255,0.85)"></div>
</div>
<div id="dlg">
<div id="dtitle"></div>
<span class="dt" id="d_title" style="letter-spacing:-0.10px;left:9.7px;top:11px;font-size:15px;color:#fff">New Formatting Rule</span>
<span class="dt" id="d_q" style="left:359.500px;top:9.500px;font-size:16.500px;color:#fff;display:inline-block;transform:scaleX(0.85);transform-origin:0 50%">?</span>
<svg style="left:414px;top:12px" width="12" height="12" viewBox="0 0 12 12"><path d="M0.300 0.300l11.400 11.400 M11.700 0.300l-11.400 11.400" stroke="#fff" stroke-width="1.300"/></svg>
<span class="dt" id="d_sel" style="left:8.5px;top:53.9px;font-size:12.5px"><u>S</u>elect a Rule Type:</span>
<!-- listbox : abs 404..840 x 429.5..571.5 => rel left 6, top 72.5 -->
<div class="a" id="lb" style="left:7px;top:71.5px;width:436px;height:143px;background:#fff;border:2px solid #686868;box-sizing:border-box">
<div class="li" style="top:0"></div>
<div class="li" style="top:23px"></div>
<div class="li" style="top:46px"></div>
<div class="li" style="top:69px"></div>
<div class="li" style="top:92px"></div>
<div class="li" style="top:115px;background:#e1e1e6;border-bottom:none;height:22.500px;width:430.500px"></div>
</div>
<span class="dt" id="l1" style="letter-spacing:0.45px;left:31.5px;top:81.6px">Format all cells based on their values</span>
<span class="dt" id="l2" style="letter-spacing:0.43px;left:31.5px;top:104.6px">Format only cells that contain</span>
<span class="dt" id="l3" style="letter-spacing:0.63px;left:31.5px;top:127.6px">Format only top or bottom ranked values</span>
<span class="dt" id="l4" style="letter-spacing:0.54px;left:31.5px;top:150.6px">Format only values that are above or below average</span>
<span class="dt" id="l5" style="letter-spacing:0.50px;left:31.5px;top:173.6px">Format only unique or duplicate values</span>
<span class="dt" id="l6" style="letter-spacing:0.58px;left:31.5px;top:196.6px">Use a formula to determine which cells to format</span>
<svg style="left:17px;top:84.500px" width="10" height="125" viewBox="0 0 10 125">
<g fill="#111"><path id="arw" d="M0 0l5.200 3.100-5.200 3.100z M4 2.150h5.300v1.900h-5.300z"/>
<use href="#arw" y="23"/><use href="#arw" y="46"/><use href="#arw" y="69"/><use href="#arw" y="92"/><use href="#arw" y="115"/></g>
</svg>
<span class="dt" id="d_edit" style="letter-spacing:0.11px;left:8.5px;top:237.8px;font-size:12.5px"><u>E</u>dit the Rule Description:</span>
<!-- description box: abs 404.5..840 x 612.7..769.4 => rel left 7, top 256 -->
<div class="a" id="db" style="left:7px;top:255.5px;width:436px;height:157.5px;background:#fff;border:1px solid #828282;box-sizing:border-box"></div>
<span class="dt b" id="d_fv" style="letter-spacing:0.25px;left:17.5px;top:268.3px;font-size:12.5px">F<u>o</u>rmat values where this formula is true:</span>
<div class="a" style="left:16px;top:288px;width:414px;height:25px;background:#fff;border:1px solid #adadad;box-sizing:border-box"></div>
<span class="dt" id="d_formula" style="letter-spacing:0.41px;left:21px;top:296.1px;font-size:12px">=MOD(ROW(),2)=1</span>
<div class="a" style="left:132px;top:292px;width:1px;height:17px;background:#000"></div>
<div class="a" style="left:405px;top:288px;width:25px;height:25px;background:#f2f2f2;border:2px solid #b9b9b9;box-sizing:border-box"></div>
<svg style="left:412px;top:293.500px" width="10" height="13" viewBox="0 0 10 13"><path d="M5 0l4.600 5.300h-2.900v3.700h-3.400v-3.700h-2.900z M0.500 10.800h9v1.800h-9z" fill="#000"/></svg>
<div class="a" style="left:9px;top:334px;width:432px;height:1px;background:#bcbcbc"></div>
<span class="dt b" id="d_prev" style="letter-spacing:0px;left:17.5px;top:376.1px;font-size:12.5px">Preview:</span>
<div class="a" style="left:81px;top:356px;width:250px;height:50px;background:#fff;border:1px solid #4e4e4e;box-sizing:border-box"></div>
<div class="a" style="left:83px;top:358px;width:246px;height:46px;background:#e2efda"></div>
<span class="dt" id="d_aabb" style="letter-spacing:-0.51px;left:162.5px;top:373.9px;font-size:15.500px;color:#1a1a1a">AaBbCcYyZz</span>
<div class="btn" style="left:343px;top:367px;width:86px;height:28px;line-height:28.500px"><span id="b_fmt" style="letter-spacing:0.05px"><u>F</u>ormat...</span></div>
<div class="btn" style="left:251px;top:418px;width:86px;height:28px;line-height:27px;border:2px solid #0078d7"><span id="b_ok" style="letter-spacing:-0.2px">OK</span></div>
<div class="btn" style="left:350px;top:418px;width:86px;height:28px;line-height:29px"><span id="b_cancel" style="letter-spacing:-0.28px">Cancel</span></div>
</div>
</body>
</html>
